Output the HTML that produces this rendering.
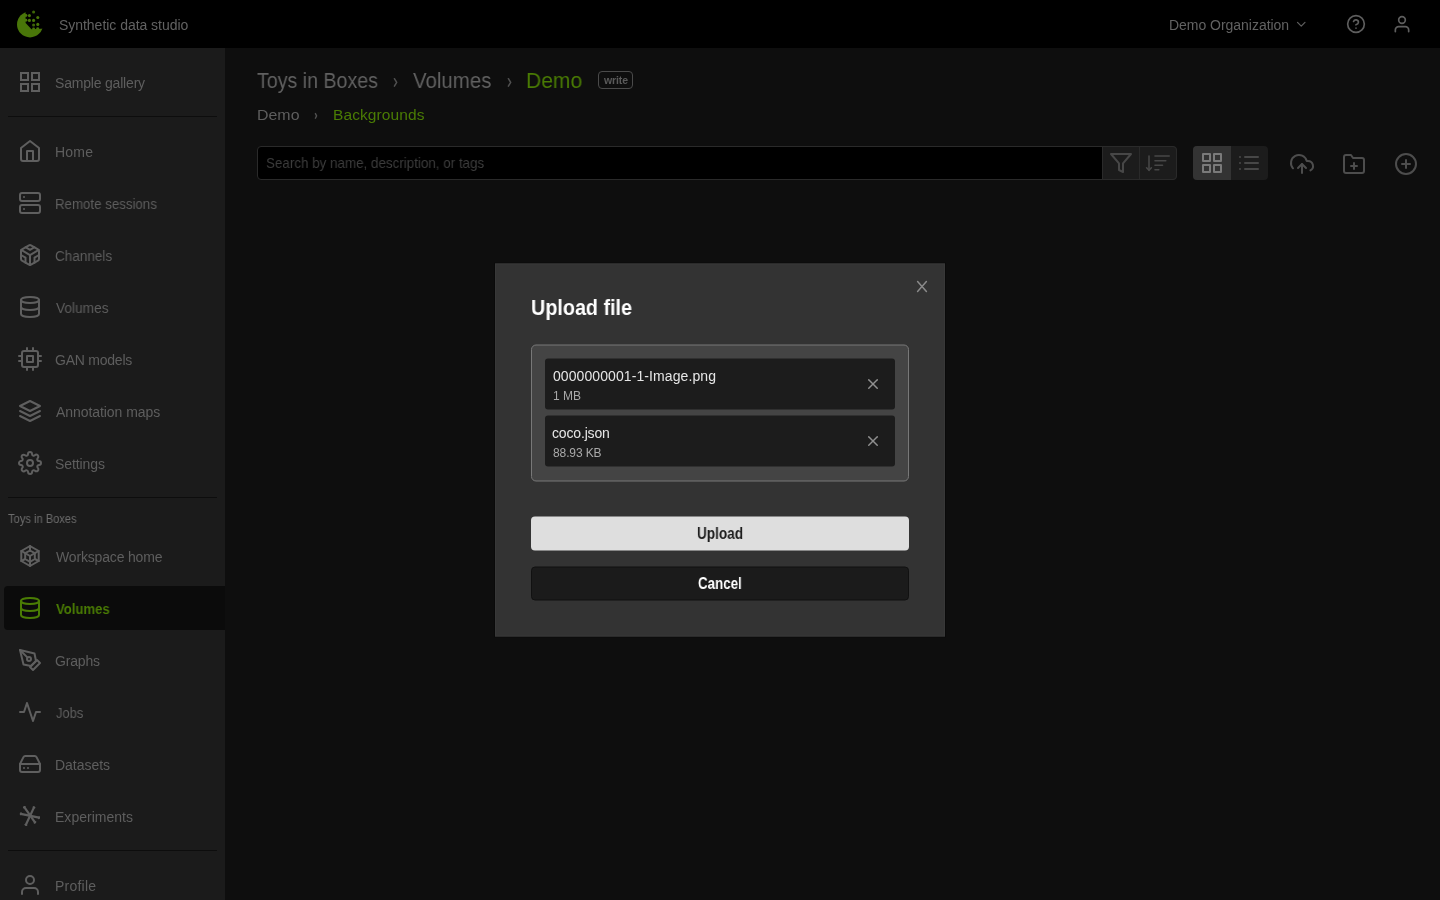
<!DOCTYPE html>
<html><head><meta charset="utf-8"><title>Synthetic data studio</title>
<style>
html,body{-webkit-font-smoothing:antialiased;margin:0;padding:0;width:1440px;height:900px;overflow:hidden;background:#0e0e0e;font-family:"Liberation Sans", sans-serif;}
.a{position:absolute;box-sizing:border-box;}
.t{will-change:transform;position:absolute;white-space:nowrap;line-height:1;font-family:"Liberation Sans", sans-serif;}
svg.i{position:absolute;overflow:visible;fill:none;stroke-linecap:round;stroke-linejoin:round;}

</style></head><body>
<div class="a" style="left:0;top:0;width:1440px;height:48px;background:#000"></div>
<div class="a" style="left:0;top:48px;width:225px;height:852px;background:#1b1b1b"></div>
<div class="a" style="left:8px;top:116px;width:209px;height:1px;background:#0d0d0d"></div>
<div class="a" style="left:8px;top:497px;width:209px;height:1px;background:#0d0d0d"></div>
<div class="a" style="left:8px;top:850px;width:209px;height:1px;background:#0d0d0d"></div>
<div class="a" style="left:4px;top:586px;width:221px;height:44px;background:#0b0b0b;border-radius:4px 0 0 4px"></div>
<!-- write badge -->
<div class="a" style="left:598px;top:71px;width:35px;height:18px;border:1px solid #4a4a4a;border-radius:4px"></div>
<!-- search -->
<div class="a" style="left:257px;top:146px;width:920px;height:34px;background:#000;border:1px solid #2a2a2a;border-radius:4px"></div>
<div class="a" style="left:1102px;top:146px;width:75px;height:34px;background:#1c1c1c;border:1px solid #2a2a2a;border-radius:0 4px 4px 0"></div>
<div class="a" style="left:1139px;top:147px;width:1px;height:32px;background:#2a2a2a"></div>
<!-- view toggle -->
<div class="a" style="left:1193px;top:146px;width:75px;height:34px;background:#1c1c1c;border-radius:4px;overflow:hidden"><div class="a" style="left:0;top:0;width:37.5px;height:34px;background:#333"></div></div>
<div style="position:absolute;left:0;top:0;width:1440px;height:900px;transform:translateY(-0.5px)">
<div class="a" style="left:494px;top:263px;width:452px;height:375px;background:#0a0a0a"></div>
<div class="a" style="left:495px;top:264px;width:450px;height:373px;background:#333;border:1px solid #383838"></div>
</div>

<svg class="i" style="left:0;top:0" width="1440" height="900" viewBox="0 0 1440 900">
<!-- logo -->
<g>
<circle cx="30" cy="24.4" r="13" fill="#497609"/>
<polygon points="25.6,8 25.6,23 31.5,29.3 45,28.6 45,8" fill="#000"/>
<g fill="#497609">
<circle cx="25.9" cy="15.5" r="1.45"/>
<circle cx="25.9" cy="20.2" r="1.45"/>
<circle cx="33.6" cy="28.9" r="1.45"/>
<circle cx="37.7" cy="28.6" r="1.45"/>
<circle cx="29.4" cy="15.6" r="1.55"/>
<circle cx="37.8" cy="17.5" r="1.55"/>
<circle cx="29.4" cy="20.4" r="1.55"/>
<circle cx="33.6" cy="20.4" r="1.55"/>
<circle cx="37.8" cy="24.4" r="1.55"/>
</g>
<g fill="#3e6607">
<circle cx="33.6" cy="12" r="1.55"/>
<circle cx="33.6" cy="25" r="1.55"/>
</g>
</g>
<!-- topbar icons -->
<g stroke="#5e5e5e" stroke-width="2" stroke-linecap="round" stroke-linejoin="round" fill="none">
<g transform="translate(1293.8 16.8) scale(0.62)"><polyline points="6 9 12 15 18 9"/></g>
<g transform="translate(1346 14) scale(0.8333)"><circle cx="12" cy="12" r="10"/><path d="M9.09 9a3 3 0 0 1 5.83 1c0 2-3 3-3 3"/><line x1="12" y1="17" x2="12.01" y2="17"/></g>
<g transform="translate(1392 14.2) scale(0.8333)"><path d="M20 21v-2a4 4 0 0 0-4-4H8a4 4 0 0 0-4 4v2"/><circle cx="12" cy="7" r="4"/></g>
</g>
<!-- sidebar icons -->
<g stroke="#5f5f5f" stroke-width="2" stroke-linecap="round" stroke-linejoin="round" fill="none">
<g transform="translate(18 70)"><rect x="3" y="3" width="7" height="7" stroke-linejoin="miter"/><rect x="14" y="3" width="7" height="7" stroke-linejoin="miter"/><rect x="14" y="14" width="7" height="7" stroke-linejoin="miter"/><rect x="3" y="14" width="7" height="7" stroke-linejoin="miter"/></g>
<g transform="translate(18 139)"><path d="M3 9l9-7 9 7v11a2 2 0 0 1-2 2H5a2 2 0 0 1-2-2z"/><polyline points="9 22 9 12 15 12 15 22"/></g>
<g transform="translate(18 191)"><rect x="2" y="2" width="20" height="8" rx="2" ry="2"/><rect x="2" y="14" width="20" height="8" rx="2" ry="2"/><line x1="6" y1="6" x2="6.01" y2="6"/><line x1="6" y1="18" x2="6.01" y2="18"/></g>
<g transform="translate(18 243)"><path d="M21 16V8a2 2 0 0 0-1-1.73l-7-4a2 2 0 0 0-2 0l-7 4A2 2 0 0 0 3 8v8a2 2 0 0 0 1 1.73l7 4a2 2 0 0 0 2 0l7-4A2 2 0 0 0 21 16z"/><polyline points="7.5 4.21 12 6.81 16.5 4.21"/><polyline points="7.5 19.79 7.5 14.6 3 12"/><polyline points="21 12 16.5 14.6 16.5 19.79"/><polyline points="3.27 6.96 12 12.01 20.73 6.96"/><line x1="12" y1="22.08" x2="12" y2="12"/></g>
<g transform="translate(18 295)"><ellipse cx="12" cy="5" rx="9" ry="3"/><path d="M21 12c0 1.66-4 3-9 3s-9-1.34-9-3"/><path d="M3 5v14c0 1.66 4 3 9 3s9-1.34 9-3V5"/></g>
<g transform="translate(18 347)"><rect x="4" y="4" width="16" height="16" rx="2" ry="2"/><rect x="9" y="9" width="6" height="6"/><line x1="9" y1="1" x2="9" y2="4"/><line x1="15" y1="1" x2="15" y2="4"/><line x1="9" y1="20" x2="9" y2="23"/><line x1="15" y1="20" x2="15" y2="23"/><line x1="20" y1="9" x2="23" y2="9"/><line x1="20" y1="14" x2="23" y2="14"/><line x1="1" y1="9" x2="4" y2="9"/><line x1="1" y1="14" x2="4" y2="14"/></g>
<g transform="translate(18 399)"><polygon points="12 2 2 7 12 12 22 7 12 2"/><polyline points="2 17 12 22 22 17"/><polyline points="2 12 12 17 22 12"/></g>
<g transform="translate(18 451)"><circle cx="12" cy="12" r="3"/><path d="M19.4 15a1.65 1.65 0 0 0 .33 1.820l.06.06a2 2 0 0 1 0 2.830 2 2 0 0 1-2.830 0l-.06-.06a1.65 1.65 0 0 0-1.820-.33 1.65 1.65 0 0 0-1 1.510V21a2 2 0 0 1-2 2 2 2 0 0 1-2-2v-.09A1.65 1.65 0 0 0 9 19.4a1.65 1.65 0 0 0-1.820.33l-.06.06a2 2 0 0 1-2.830 0 2 2 0 0 1 0-2.830l.06-.06a1.65 1.65 0 0 0 .33-1.820 1.65 1.65 0 0 0-1.510-1H3a2 2 0 0 1-2-2 2 2 0 0 1 2-2h.09A1.65 1.65 0 0 0 4.6 9a1.65 1.65 0 0 0-.33-1.820l-.06-.06a2 2 0 0 1 0-2.830 2 2 0 0 1 2.830 0l.06.06a1.65 1.65 0 0 0 1.820.33H9a1.65 1.65 0 0 0 1-1.510V3a2 2 0 0 1 2-2 2 2 0 0 1 2 2v.09a1.65 1.65 0 0 0 1 1.510 1.65 1.65 0 0 0 1.820-.33l.06-.06a2 2 0 0 1 2.830 0 2 2 0 0 1 0 2.830l-.06.06a1.65 1.65 0 0 0-.33 1.820V9a1.65 1.65 0 0 0 1.510 1H21a2 2 0 0 1 2 2 2 2 0 0 1-2 2h-.09a1.65 1.65 0 0 0-1.510 1z"/></g>
<!-- workspace home: custom hex cube -->
<g>
<polygon points="30,546 38.7,551 38.7,561 30,566 21.3,561 21.3,551"/>
<polygon points="30,550.5 34.8,553.2 34.8,559 30,561.8 25.2,559 25.2,553.2"/>
<polyline points="25.2,553.2 30,556 34.8,553.2"/>
<line x1="30" y1="556" x2="30" y2="566"/>
<line x1="30" y1="546" x2="30" y2="550.5"/>
<line x1="21.3" y1="551" x2="25.2" y2="553.2"/>
<line x1="38.7" y1="551" x2="34.8" y2="553.2"/>
<line x1="21.3" y1="561" x2="25.2" y2="559"/>
<line x1="38.7" y1="561" x2="34.8" y2="559"/>
</g>
<g transform="translate(18 648)"><path d="M12 19l7-7 3 3-7 7-3-3z"/><path d="M18 13l-1.5-7.5L2 2l3.5 14.5L13 18l5-5z"/><path d="M2 2l7.586 7.586"/><circle cx="11" cy="11" r="2"/></g>
<g transform="translate(18 700)"><polyline points="22 12 18 12 15 21 9 3 6 12 2 12"/></g>
<g transform="translate(18 752)"><line x1="22" y1="12" x2="2" y2="12"/><path d="M5.45 5.11L2 12v6a2 2 0 0 0 2 2h16a2 2 0 0 0 2-2v-6l-3.45-6.89A2 2 0 0 0 16.76 4H7.24a2 2 0 0 0-1.79 1.11z"/><line x1="6" y1="16" x2="6.01" y2="16"/><line x1="10" y1="16" x2="10.01" y2="16"/></g>
<!-- experiments asterisk -->
<g stroke-width="2.2">
<line x1="24.3" y1="807.2" x2="35.0" y2="822.4"/>
<line x1="34.0" y1="807.4" x2="25.9" y2="824.8"/>
<line x1="20.8" y1="813.8" x2="39.0" y2="817.7"/>
</g>
<g stroke-width="1.6">
<line x1="24.91" y1="806.77" x2="23.69" y2="807.63"/>
<line x1="35.61" y1="821.97" x2="34.39" y2="822.83"/>
<line x1="34.68" y1="807.72" x2="33.32" y2="807.08"/>
<line x1="26.58" y1="825.12" x2="25.22" y2="824.48"/>
<line x1="20.96" y1="813.07" x2="20.64" y2="814.53"/>
<line x1="39.16" y1="816.97" x2="38.84" y2="818.43"/>
</g>
<g transform="translate(18 873)"><path d="M20 21v-2a4 4 0 0 0-4-4H8a4 4 0 0 0-4 4v2"/><circle cx="12" cy="7" r="4"/></g>
</g>
<!-- active volumes icon -->
<g stroke="#4a7c04" stroke-width="2" stroke-linecap="round" stroke-linejoin="round" fill="none" transform="translate(18 596)"><ellipse cx="12" cy="5" rx="9" ry="3"/><path d="M21 12c0 1.66-4 3-9 3s-9-1.34-9-3"/><path d="M3 5v14c0 1.66 4 3 9 3s9-1.34 9-3V5"/></g>
<!-- breadcrumb chevrons -->
<g stroke="#505050" stroke-width="1.5" stroke-linecap="round" stroke-linejoin="round" fill="none">
<polyline points="394.4,78.7 396.7,82.4 394.4,86.2"/>
<polyline points="508.4,78.7 510.7,82.4 508.4,86.2"/>
<polyline points="315.4,113.6 316.6,115.9 315.4,118.2" stroke-width="1.4"/>
</g>

<!-- toolbar -->
<g stroke="#474747" stroke-width="2" stroke-linecap="round" stroke-linejoin="round" fill="none">
<g transform="translate(1109 151)"><polygon points="22 3 2 3 10 12.46 10 19 14 21 14 12.46 22 3"/></g>
<g stroke-width="1.6"><line x1="1149" y1="156" x2="1149" y2="170.3"/><polyline points="1146.6,167.8 1149,170.3 1151.4,167.8"/><line x1="1155" y1="156" x2="1169.2" y2="156"/><line x1="1155" y1="160.7" x2="1165.8" y2="160.7"/><line x1="1155" y1="165.2" x2="1162.5" y2="165.2"/><line x1="1155" y1="169.8" x2="1158.8" y2="169.8"/></g>
<g transform="translate(1237 151)"><line x1="8" y1="6" x2="21" y2="6"/><line x1="8" y1="12" x2="21" y2="12"/><line x1="8" y1="18" x2="21" y2="18"/><line x1="3" y1="6" x2="3.01" y2="6"/><line x1="3" y1="12" x2="3.01" y2="12"/><line x1="3" y1="18" x2="3.01" y2="18"/></g>
</g>
<g stroke="#7a7a7a" stroke-width="2" fill="none" transform="translate(1200 151)"><rect x="3" y="3" width="7" height="7"/><rect x="14" y="3" width="7" height="7"/><rect x="14" y="14" width="7" height="7"/><rect x="3" y="14" width="7" height="7"/></g>
<g stroke="#4d4d4d" stroke-width="2" stroke-linecap="round" stroke-linejoin="round" fill="none">
<g transform="translate(1290 152)"><polyline points="16 16 12 12 8 16"/><line x1="12" y1="12" x2="12" y2="21"/><path d="M20.39 18.39A5 5 0 0 0 18 9h-1.26A8 8 0 1 0 3 16.3"/></g>
<g transform="translate(1342 152)"><path d="M22 19a2 2 0 0 1-2 2H4a2 2 0 0 1-2-2V5a2 2 0 0 1 2-2h5l2 3h9a2 2 0 0 1 2 2z"/><line x1="12" y1="11" x2="12" y2="17"/><line x1="9" y1="14" x2="15" y2="14"/></g>
<g transform="translate(1394 152)"><circle cx="12" cy="12" r="10"/><line x1="12" y1="8" x2="12" y2="16"/><line x1="8" y1="12" x2="16" y2="12"/></g>
</g>
</svg>

<div class="t" style="left:59.40px;top:18.00px;font-size:14px;font-weight:400;color:#626262;letter-spacing:-0.035px">Synthetic data studio</div>
<div class="t" style="left:1168.80px;top:18.00px;font-size:14px;font-weight:400;color:#626262;letter-spacing:-0.031px">Demo Organization</div>
<div class="t" style="left:55.40px;top:76.00px;font-size:14px;font-weight:400;color:#5e5e5e;letter-spacing:-0.192px">Sample gallery</div>
<div class="t" style="left:55.40px;top:145.00px;font-size:14px;font-weight:400;color:#5e5e5e;letter-spacing:0.200px">Home</div>
<div class="t" style="left:55.45px;top:197.00px;font-size:14px;font-weight:400;color:#5e5e5e;letter-spacing:0.000px;transform:scaleX(0.9481);transform-origin:0 0">Remote sessions</div>
<div class="t" style="left:55.43px;top:249.00px;font-size:14px;font-weight:400;color:#5e5e5e;letter-spacing:0.000px;transform:scaleX(0.9655);transform-origin:0 0">Channels</div>
<div class="t" style="left:56.40px;top:301.00px;font-size:14px;font-weight:400;color:#5e5e5e;letter-spacing:0.000px;transform:scaleX(0.9774);transform-origin:0 0">Volumes</div>
<div class="t" style="left:55.40px;top:353.00px;font-size:14px;font-weight:400;color:#5e5e5e;letter-spacing:-0.233px">GAN models</div>
<div class="t" style="left:56.40px;top:405.00px;font-size:14px;font-weight:400;color:#5e5e5e;letter-spacing:-0.064px">Annotation maps</div>
<div class="t" style="left:55.40px;top:457.00px;font-size:14px;font-weight:400;color:#5e5e5e;letter-spacing:-0.086px">Settings</div>
<div class="t" style="left:56.40px;top:550.00px;font-size:14px;font-weight:400;color:#5e5e5e;letter-spacing:-0.169px">Workspace home</div>
<div class="t" style="left:55.40px;top:654.00px;font-size:14px;font-weight:400;color:#5e5e5e;letter-spacing:-0.160px">Graphs</div>
<div class="t" style="left:56.40px;top:706.00px;font-size:14px;font-weight:400;color:#5e5e5e;letter-spacing:0.000px;transform:scaleX(0.9241);transform-origin:0 0">Jobs</div>
<div class="t" style="left:55.40px;top:758.00px;font-size:14px;font-weight:400;color:#5e5e5e;letter-spacing:-0.029px">Datasets</div>
<div class="t" style="left:55.40px;top:810.00px;font-size:14px;font-weight:400;color:#5e5e5e;letter-spacing:0.020px">Experiments</div>
<div class="t" style="left:55.40px;top:879.00px;font-size:14px;font-weight:400;color:#5e5e5e;letter-spacing:0.233px">Profile</div>
<div class="t" style="left:56.20px;top:602.00px;font-size:14px;font-weight:700;color:#4a7c04;letter-spacing:0.000px;transform:scaleX(0.9368);transform-origin:0 0">Volumes</div>
<div class="t" style="left:8.30px;top:513.00px;font-size:12px;font-weight:400;color:#6c6c6c;letter-spacing:0.000px;transform:scaleX(0.9270);transform-origin:0 0">Toys in Boxes</div>
<div class="t" style="left:257.20px;top:70.00px;font-size:22px;font-weight:400;color:#616161;letter-spacing:0.000px;transform:scaleX(0.8911);transform-origin:0 0">Toys in Boxes</div>
<div class="t" style="left:413.40px;top:70.00px;font-size:22px;font-weight:400;color:#616161;letter-spacing:0.000px;transform:scaleX(0.9286);transform-origin:0 0">Volumes</div>
<div class="t" style="left:526.09px;top:70.00px;font-size:22px;font-weight:400;color:#4a7c04;letter-spacing:0.000px;transform:scaleX(0.9571);transform-origin:0 0">Demo</div>
<div class="t" style="left:603.50px;top:75.00px;font-size:10.5px;font-weight:700;color:#5a5a5a;letter-spacing:-0.125px">write</div>
<div class="t" style="left:256.97px;top:107.00px;font-size:15.5px;font-weight:400;color:#5e5e5e;letter-spacing:0.000px;transform:scaleX(1.0275);transform-origin:0 0">Demo</div>
<div class="t" style="left:332.50px;top:107.00px;font-size:15.5px;font-weight:400;color:#4a7c04;letter-spacing:0.100px">Backgrounds</div>
<div class="t" style="left:265.61px;top:155.00px;font-size:15px;font-weight:400;color:#3c3c3c;letter-spacing:0.000px;transform:scaleX(0.8930);transform-origin:0 0">Search by name, description, or tags</div>
<div class="modal" style="position:absolute;left:0;top:0;width:1440px;height:900px;transform:translateY(0.5px)">
<!-- modal -->
<div class="a" style="left:531px;top:344px;width:378px;height:137px;background:#444;border:1px solid #787878;border-radius:5px"></div>
<div class="a" style="left:545px;top:358px;width:350px;height:51px;background:#1c1c1c;border-radius:3px"></div>
<div class="a" style="left:545px;top:415px;width:350px;height:51px;background:#1c1c1c;border-radius:3px"></div>
<div class="a" style="left:531px;top:516px;width:378px;height:34px;background:#dedede;border-radius:4px"></div>
<div class="a" style="left:531px;top:566px;width:378px;height:34px;background:#1b1b1b;border:1px solid #111;border-radius:4px"></div>

<svg class="i" style="left:0;top:0" width="1440" height="900" viewBox="0 0 1440 900">
<!-- modal icons -->
<g stroke="#8a8a8a" stroke-width="1.5" stroke-linecap="round" fill="none">
<line x1="917.6" y1="281.1" x2="926.4" y2="290.9"/><line x1="926.4" y1="281.1" x2="917.6" y2="290.9"/>
</g>
<g stroke="#8f8f8f" stroke-width="1.5" stroke-linecap="round" fill="none">
<line x1="868.75" y1="379.25" x2="877.25" y2="387.75"/><line x1="877.25" y1="379.25" x2="868.75" y2="387.75"/>
<line x1="868.75" y1="436.25" x2="877.25" y2="444.75"/><line x1="877.25" y1="436.25" x2="868.75" y2="444.75"/>
</g>
</svg>

</div>
<div class="t" style="left:530.80px;top:297.00px;font-size:22px;font-weight:700;color:#ffffff;letter-spacing:0.000px;transform:scaleX(0.8982);transform-origin:0 0">Upload file</div>
<div class="t" style="left:553.30px;top:369.00px;font-size:14px;font-weight:400;color:#e6e6e6;letter-spacing:0.086px">0000000001-1-Image.png</div>
<div class="t" style="left:552.80px;top:390.00px;font-size:12px;font-weight:400;color:#a9a9a9;letter-spacing:0.033px">1 MB</div>
<div class="t" style="left:552.35px;top:426.00px;font-size:14px;font-weight:400;color:#e6e6e6;letter-spacing:-0.163px">coco.json</div>
<div class="t" style="left:553.35px;top:447.00px;font-size:12px;font-weight:400;color:#a9a9a9;letter-spacing:-0.107px">88.93 KB</div>
<div class="t" style="left:697.05px;top:526.00px;font-size:16px;font-weight:700;color:#1e1e1e;letter-spacing:0.000px;transform:scaleX(0.8500);transform-origin:0 0">Upload</div>
<div class="t" style="left:697.92px;top:576.00px;font-size:16px;font-weight:700;color:#ffffff;letter-spacing:0.000px;transform:scaleX(0.8330);transform-origin:0 0">Cancel</div>
</body></html>
